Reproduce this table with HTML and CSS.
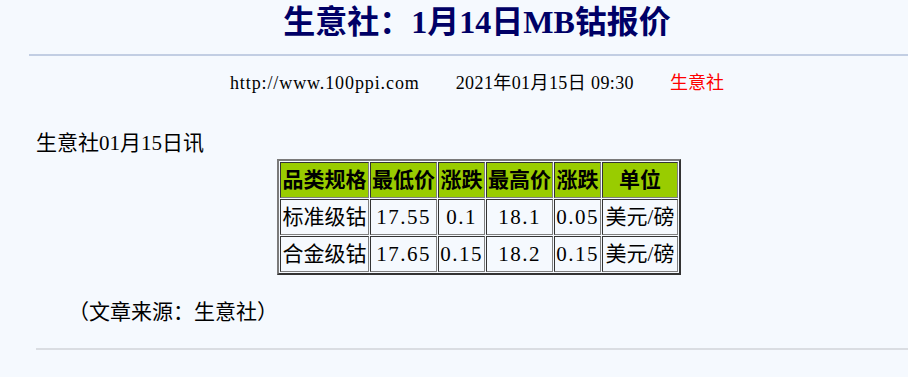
FILE: index.html
```html
<!DOCTYPE html>
<html lang="zh-CN">
<head>
<meta charset="utf-8">
<title>生意社：1月14日MB钴报价</title>
<link rel="stylesheet" href="styles.css">
</head>
<body>
<div class="wrap">
  <h1 class="title">生意社：1月14日MB钴报价</h1>
  <hr class="rule-top">
  <div class="meta">
    <span class="url">http://www.100ppi.com</span>
    <span class="date">2021年01月15日 09:30</span>
    <span class="src">生意社</span>
  </div>
  <div class="content">
    <p class="lead">生意社01月15日讯</p>
    <table class="price">
      <tr class="head">
        <td class="c1">品类规格</td>
        <td class="c2">最低价</td>
        <td class="c3">涨跌</td>
        <td class="c4">最高价</td>
        <td class="c5">涨跌</td>
        <td class="c6">单位</td>
      </tr>
      <tr>
        <td>标准级钴</td>
        <td class="num">17.55</td>
        <td class="num">0.1</td>
        <td class="num">18.1</td>
        <td class="num">0.05</td>
        <td>美元/磅</td>
      </tr>
      <tr>
        <td>合金级钴</td>
        <td class="num">17.65</td>
        <td class="num">0.15</td>
        <td class="num">18.2</td>
        <td class="num">0.15</td>
        <td>美元/磅</td>
      </tr>
    </table>
    <p class="source">（文章来源：生意社）</p>
    <hr class="rule-bottom">
  </div>
</div>
</body>
</html>
```
FILE: styles.css
```css
html, body {
  margin: 0;
  padding: 0;
  overflow: hidden;
  background: #f5f9fe;
}
body {
  font-family: "Liberation Serif", "Noto Sans CJK SC", serif;
  color: #000;
}
.wrap {
  margin-left: 29px;
  width: 896px;
}
.title {
  margin: 0;
  font-size: 32px;
  line-height: 44px;
  font-weight: bold;
  text-align: center;
  color: #000066;
}
.rule-top {
  margin: 10px 0 0 0;
  border: 0;
  height: 2px;
  background: #c2cee3;
}
.meta {
  margin-top: 15px;
  display: flex;
  justify-content: center;
  gap: 36px;
  font-size: 18px;
  line-height: 24px;
}
.url {
  letter-spacing: 0.9px;
}
.date {
  letter-spacing: 0.4px;
}
.src {
  color: #ff0000;
}
.content {
  padding: 0 3px 0 7px;
}
.lead {
  margin: 33px 0 0 0;
  font-size: 21px;
  line-height: 30px;
}
.price {
  margin: 1px auto 0 auto;
  border-collapse: separate;
  border-spacing: 1px;
  border-style: solid;
  border-width: 2px;
  border-color: #7a7a7a #333333 #333333 #7a7a7a;
  font-size: 21px;
}
.price td {
  padding: 0;
  line-height: 34px;
  text-align: center;
  white-space: nowrap;
  border-style: solid;
  border-width: 1px;
  border-color: #333333 #808080 #808080 #333333;
}
.price td.num {
  letter-spacing: 1.5px;
}
.price .head td {
  background: #99cc00;
  font-weight: bold;
}
.c1 { width: 87px; }
.c2 { width: 65px; }
.c3 { width: 45px; }
.c4 { width: 65px; }
.c5 { width: 45px; }
.c6 { width: 74px; }
.source {
  margin: 22px 0 0 0;
  padding-left: 32px;
  font-size: 21px;
  line-height: 30px;
}
.rule-bottom {
  margin: 21px 0 0 0;
  border: 0;
  height: 2px;
  background: #dadde2;
}
```
